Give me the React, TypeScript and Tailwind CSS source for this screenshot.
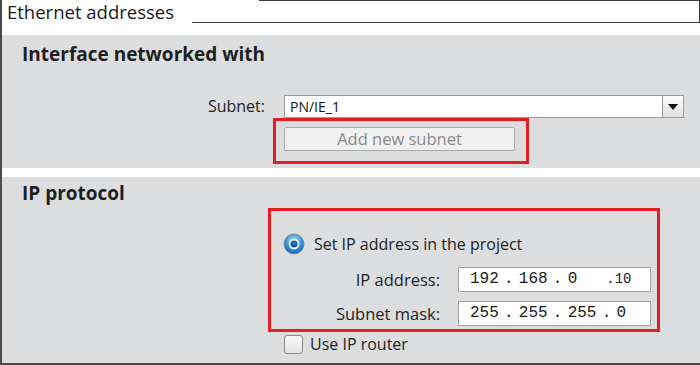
import React from "react";

const font = { fontFamily: '"Open Sans", "Noto Sans", sans-serif' };
const mono = { fontFamily: '"Liberation Mono", "DejaVu Sans Mono", monospace' };

function Radio() {
  return (
    <svg width="22" height="22" viewBox="0 0 22 22">
      <defs>
        <radialGradient id="rg" cx="50%" cy="35%" r="60%">
          <stop offset="0%" stopColor="#bfe6ff" />
          <stop offset="60%" stopColor="#3d9be3" />
          <stop offset="100%" stopColor="#1c68b5" />
        </radialGradient>
        <radialGradient id="rc" cx="50%" cy="40%" r="60%">
          <stop offset="0%" stopColor="#2a7fd0" />
          <stop offset="100%" stopColor="#0a3f86" />
        </radialGradient>
      </defs>
      <circle cx="11" cy="11" r="10" fill="url(#rg)" stroke="#7a8a9a" strokeWidth="1" />
      <circle cx="11" cy="11" r="5.2" fill="#ffffff" />
      <circle cx="11" cy="11" r="3.6" fill="url(#rc)" />
    </svg>
  );
}

function Dot() {
  return <span className="inline-block w-[20px] text-center">.</span>;
}

export default function App() {
  return (
    <div
      className="w-[700px] h-[365px] bg-white border-l-2 border-b-2 border-[#4a4a4a] overflow-hidden flex flex-col"
      style={font}
    >
      {/* header */}
      <div className="h-[35px] flex items-start shrink-0">
        <div className="pl-[5px] pt-[1px] text-[18.5px] leading-[22px] text-[#1a1a1a] w-[190px] whitespace-nowrap">
          Ethernet addresses
        </div>
        <div className="flex-1 h-[23px] border-b border-r border-[#3a3a3a] flex justify-end">
          <div className="w-[440px] h-px bg-[#3a3a3a]" />
        </div>
      </div>

      {/* section 1 */}
      <div className="bg-[#dcdddf] h-[133px] shrink-0 flex flex-col">
        <div className="pl-[20px] pt-[7px] text-[19px] leading-[25px] font-bold text-[#1e1e1e]">
          Interface networked with
        </div>
        <div className="mt-[28px] flex items-center h-[23px]">
          <div className="w-[263px] text-right text-[16px] text-[#222] leading-[23px]">Subnet:</div>
          <div className="ml-[19px] w-[400px] h-[23px] bg-white border border-[#9a9a9a] flex">
            <div className="flex-1 pl-[5px] text-[14px] leading-[21px] text-[#111]">PN/IE_1</div>
            <div className="w-[21px] h-full border-l border-[#9a9a9a] bg-gradient-to-b from-[#fbfbfb] to-[#e2e2e2] flex items-center justify-center">
              <svg width="10" height="6" viewBox="0 0 10 6">
                <path d="M0 0 H10 L5 6 Z" fill="#111" />
              </svg>
            </div>
          </div>
        </div>
        <div className="ml-[271px] w-[256px] h-[46px] border-[3px] border-[#e31e24] pt-[6px] pl-[8px]">
          <div className="w-[231px] h-[24px] border border-[#a8a8a8] bg-[#f0f0f0] rounded-[2px] text-center text-[16.5px] leading-[22px] text-[#8a8a8a]">
            Add new subnet
          </div>
        </div>
      </div>

      {/* white strip */}
      <div className="h-[9px] shrink-0 bg-white" />

      {/* section 2 */}
      <div className="bg-[#dcdddf] flex-1 flex flex-col">
        <div className="pl-[20px] pt-[4px] text-[19px] leading-[25px] font-bold text-[#1e1e1e]">
          IP protocol
        </div>
        <div className="mt-[2px] ml-[266px] w-[392px] h-[124px] border-[3px] border-[#e31e24] flex flex-col">
          <div className="mt-[22px] flex items-center h-[22px]">
            <div className="ml-[12px]">
              <Radio />
            </div>
            <div className="ml-[9px] text-[16px] leading-[22px] text-[#1e1e1e]">Set IP address in the project</div>
          </div>
          <div className="mt-[12px] flex items-center h-[25px]">
            <div className="w-[169px] text-right text-[16.5px] text-[#222] leading-[25px] whitespace-nowrap">IP address:</div>
            <div
              className="ml-[18px] w-[193px] h-[25px] bg-white border border-[#a0a0a0] pl-[11px] text-[16px] leading-[23px] text-[#1a1a1a] whitespace-pre"
              style={mono}
            >
              192<Dot />168<Dot />0
              <span className="inline-block w-[29px]" />
              <span className="text-[14px]">.10</span>
            </div>
          </div>
          <div className="mt-[9px] flex items-center h-[25px]">
            <div className="w-[169px] text-right text-[16.5px] text-[#222] leading-[25px] whitespace-nowrap">Subnet mask:</div>
            <div
              className="ml-[18px] w-[193px] h-[25px] bg-white border border-[#a0a0a0] pl-[11px] text-[16px] leading-[23px] text-[#1a1a1a] whitespace-pre"
              style={mono}
            >
              255<Dot />255<Dot />255<Dot />0
            </div>
          </div>
        </div>
        <div className="mt-[2px] ml-[282px] flex items-center h-[20px]">
          <div className="w-[19px] h-[19px] rounded-[3px] border border-[#8a8a8a] bg-gradient-to-b from-[#f6f6f6] to-[#e4e4e4]" />
          <div className="ml-[7px] text-[16px] leading-[20px] text-[#1e1e1e]">Use IP router</div>
        </div>
      </div>
    </div>
  );
}
